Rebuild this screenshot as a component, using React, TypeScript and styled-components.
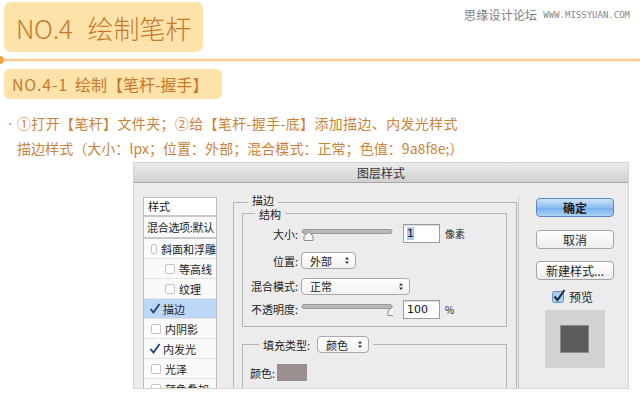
import styled, { createGlobalStyle } from 'styled-components'

const GlobalStyle = createGlobalStyle`
  html, body {
    margin: 0;
    padding: 0;
    background: #fff;
  }
  body {
    font-family: "Noto Sans CJK SC", "Noto Sans", sans-serif;
  }
`

const orange = '#c57a2c'
const peach = '#fde2a9'

const styleItems = [
  { label: '斜面和浮雕', indent: 0, checked: false },
  { label: '等高线', indent: 14, checked: false },
  { label: '纹理', indent: 14, checked: false },
  { label: '描边', indent: 0, checked: true, selected: true },
  { label: '内阴影', indent: 0, checked: false },
  { label: '内发光', indent: 0, checked: true },
  { label: '光泽', indent: 0, checked: false },
  { label: '颜色叠加', indent: 0, checked: false },
]

function App() {
  return (
    <Page>
      <GlobalStyle />
      <Header>
        <TitleBox>
          NO.4<TitleCn>绘制笔杆</TitleCn>
        </TitleBox>
        <Watermark>
          <MarkCn>思缘设计论坛</MarkCn>
          <MarkUrl>WWW.MISSYUAN.COM</MarkUrl>
        </Watermark>
      </Header>
      <Divider />
      <SubTitle>
        <SubNo>NO.4-1</SubNo>
        <SubCn>绘制</SubCn>【笔杆-握手】
      </SubTitle>
      <Para>
        <Line $spacing={0.35}>
          <Bullet>·</Bullet>①打开【笔杆】文件夹；②给【笔杆-握手-底】添加描边、内发光样式
        </Line>
        <Line $spacing={0.05}>描边样式（大小：lpx；位置：外部；混合模式：正常；色值：9a8f8e;）</Line>
      </Para>

      <Dialog>
        <TitleBar>图层样式</TitleBar>
        <Body>
          <StyleList>
            <ListHead>样式</ListHead>
            <ListBlend>混合选项:默认</ListBlend>
            {styleItems.map((it) => (
              <ListRow key={it.label} $indent={it.indent} $selected={!!it.selected}>
                {it.checked ? <Tick /> : <Box />}
                {it.label}
              </ListRow>
            ))}
          </StyleList>

          <Main>
            <Group $pad="10px 9px 0 8px" $tall>
              <Legend $top={-10}>描边</Legend>
              <Group $pad="6px 0 0 0" style={{ height: 114 }}>
                <Legend $left={12}>结构</Legend>
                <Row $h={27}>
                  <Label>大小:</Label>
                  <Slider pos={0} />
                  <Field $selected>1</Field>
                  <Unit>像素</Unit>
                </Row>
                <Row $h={27}>
                  <Label>位置:</Label>
                  <Select $w={55}>外部</Select>
                </Row>
                <Row $h={24}>
                  <Label>混合模式:</Label>
                  <Select $w={109}>正常</Select>
                </Row>
                <Row $h={22}>
                  <Label>不透明度:</Label>
                  <Slider pos={1} />
                  <Field>100</Field>
                  <Unit>%</Unit>
                </Row>
              </Group>
              <Group $pad="19px 0 0 7px" $gapTop={17} $tall>
                <Legend $left={16} $top={-9} $h={17}>
                  填充类型:<Select $w={52} style={{ marginLeft: 7 }}>颜色</Select>
                </Legend>
                <ColorRow>
                  颜色:<Swatch />
                </ColorRow>
              </Group>
            </Group>
          </Main>

          <Side>
            <Button $primary>确定</Button>
            <Button $gap={13}>取消</Button>
            <Button $gap={12}>新建样式...</Button>
            <PreviewCheck>
              <BlueCheck />
              预览
            </PreviewCheck>
            <Preview>
              <PreviewSquare />
            </Preview>
          </Side>
        </Body>
      </Dialog>
    </Page>
  )
}

export default App

function Box() {
  return <CheckBox />
}

function Tick() {
  return (
    <svg width="12" height="11" viewBox="0 0 12 11" style={{ marginRight: 2, marginLeft: -2 }}>
      <path d="M1.5 6 L4.5 9.5 L10.5 1" fill="none" stroke="#1d3f7a" strokeWidth="1.8" />
    </svg>
  )
}

function BlueCheck() {
  return (
    <svg width="14" height="14" viewBox="0 0 14 14" style={{ marginRight: 3 }}>
      <rect x="0.5" y="2.5" width="11" height="11" rx="2" fill="#a9cdf3" stroke="#6a8fbf" />
      <path d="M2.5 7.5 L5.5 11 L12.5 1" fill="none" stroke="#1a2a4a" strokeWidth="2" />
    </svg>
  )
}

function Slider({ pos }: { pos: number }) {
  const x = 3 + pos * 84
  return (
    <svg width="92" height="14" viewBox="0 0 92 14" style={{ marginTop: 2, flexShrink: 0 }}>
      <rect x="1" y="1.5" width="90" height="4" rx="2" fill="#b8b8b8" stroke="#8a8a8a" strokeWidth="0.8" />
      <path
        d={`M${x} 12.5 L${x} 8 L${x + 4.5} 4 L${x + 9} 8 L${x + 9} 12.5 Z`}
        fill="#f6f6f6"
        stroke="#8c8c8c"
        strokeWidth="1"
      />
    </svg>
  )
}

function SelectArrows() {
  return (
    <svg width="6" height="9" viewBox="0 0 6 9">
      <path d="M1 3.5 L3 1 L5 3.5 Z M1 5.5 L3 8 L5 5.5 Z" fill="#333" />
    </svg>
  )
}

function Select({ $w, children, style }: { $w: number; children: React.ReactNode; style?: React.CSSProperties }) {
  return (
    <SelectBox $w={$w} style={style}>
      <span>{children}</span>
      <SelectArrows />
    </SelectBox>
  )
}

const Page = styled.div`
  width: 640px;
  height: 393px;
  overflow: hidden;
`

const Header = styled.div`
  display: flex;
  align-items: flex-start;
  height: 52px;
  padding: 2px 10px 0 4px;
  box-sizing: border-box;
`

const TitleBox = styled.div`
  width: 199px;
  height: 50px;
  box-sizing: border-box;
  padding-left: 12px;
  display: flex;
  align-items: center;
  background: ${peach};
  border-radius: 7px;
  color: ${orange};
  font-size: 26px;
  font-weight: 300;
  letter-spacing: -0.3px;
`

const TitleCn = styled.span`
  margin-left: 15px;
  letter-spacing: 0;
`

const Watermark = styled.div`
  margin-left: auto;
  margin-top: 4px;
  display: flex;
  align-items: center;
  gap: 6px;
  color: #7d7d7d;
`

const MarkCn = styled.span`
  font-size: 12px;
  letter-spacing: 0.2px;
`

const MarkUrl = styled.span`
  font-family: "DejaVu Sans Mono", monospace;
  font-size: 9px;
  color: #888;
`

const Divider = styled.div`
  position: relative;
  margin-top: 7px;
  height: 2px;
  background: #f8c98c;
  box-shadow: 0 0 3px rgba(248, 201, 140, 0.6);

  &::before {
    content: '';
    position: absolute;
    left: -4px;
    top: -3px;
    width: 8px;
    height: 8px;
    border-radius: 50%;
    background: #f2a640;
  }
`

const SubTitle = styled.div`
  margin: 8px 0 0 4px;
  width: 218px;
  height: 30px;
  box-sizing: border-box;
  padding-left: 8px;
  background: ${peach};
  border-radius: 6px;
  color: ${orange};
  font-size: 16px;
  line-height: 30px;
  white-space: nowrap;
`

const SubNo = styled.span`
  letter-spacing: 0.8px;
`

const SubCn = styled.span`
  margin-left: 7px;
`

const Para = styled.div`
  margin-top: 12px;
  padding-left: 17px;
  color: #c9843a;
  font-size: 14px;
  line-height: 24px;
`

const Line = styled.div<{ $spacing: number }>`
  white-space: nowrap;
  letter-spacing: ${(p) => p.$spacing}px;
`

const Bullet = styled.span`
  display: inline-block;
  width: 9px;
  margin-left: -9px;
  font-family: "DejaVu Sans", sans-serif;
`

const Dialog = styled.div`
  margin: 3px 0 0 134px;
  width: 494px;
  height: 225px;
  display: flex;
  flex-direction: column;
  overflow: hidden;
  background: #ececec;
  box-shadow: 0 0 0 1px #d4d4d4;
`

const TitleBar = styled.div`
  height: 20px;
  flex-shrink: 0;
  box-sizing: border-box;
  border-bottom: 1px solid #a8a8a8;
  background: linear-gradient(#ececec, #d0d0d0);
  text-align: center;
  font-size: 12px;
  line-height: 20px;
  color: #333;
`

const Body = styled.div`
  flex: 1;
  display: flex;
  align-items: flex-start;
  padding: 14px 0 0 9px;
  font-size: 11px;
  color: #222;
`

const StyleList = styled.div`
  width: 74px;
  flex-shrink: 0;
  box-sizing: border-box;
  border: 1px solid #bcbcbc;
  background: #fafafa;
`

const ListHead = styled.div`
  height: 17px;
  line-height: 17px;
  padding-left: 4px;
  border-bottom: 2px solid #c9c9c9;
  background: #fff;
`

const ListBlend = styled.div`
  height: 20px;
  line-height: 20px;
  padding-left: 3px;
  border-bottom: 2px solid #c9c9c9;
  white-space: nowrap;
  letter-spacing: -0.3px;
`

const ListRow = styled.div<{ $indent: number; $selected: boolean }>`
  height: 20px;
  display: flex;
  align-items: center;
  box-sizing: border-box;
  padding-left: ${(p) => 7 + p.$indent}px;
  border-bottom: 1px solid #e4e4e4;
  background: ${(p) => (p.$selected ? '#bcd6f6' : '#fafafa')};
  white-space: nowrap;
`

const CheckBox = styled.span`
  width: 8px;
  height: 8px;
  margin-right: 4px;
  border: 1px solid #c4c4c4;
  border-radius: 2px;
  background: #fff;
`

const Main = styled.div`
  width: 284px;
  flex-shrink: 0;
  margin: 5px 0 0 16px;
`

const Group = styled.div<{ $pad: string; $tall?: boolean; $gapTop?: number }>`
  position: relative;
  box-sizing: border-box;
  margin-top: ${(p) => p.$gapTop || 0}px;
  padding: ${(p) => p.$pad};
  min-height: ${(p) => (p.$tall ? '200px' : '0')};
  border: 1px solid #b4b4b4;
`

const Legend = styled.div<{ $left?: number; $top?: number; $h?: number }>`
  position: absolute;
  top: ${(p) => p.$top ?? -7}px;
  left: ${(p) => p.$left ?? 14}px;
  height: ${(p) => p.$h ?? 13}px;
  display: flex;
  align-items: center;
  padding: 0 4px;
  background: #ececec;
  white-space: nowrap;
`

const Row = styled.div<{ $h: number }>`
  height: ${(p) => p.$h}px;
  display: flex;
  align-items: center;
`

const Label = styled.span`
  width: 55px;
  flex-shrink: 0;
  margin-right: 3px;
  text-align: right;
  white-space: nowrap;
`

const Field = styled.div<{ $selected?: boolean }>`
  width: 37px;
  height: 19px;
  margin-left: 10px;
  box-sizing: border-box;
  padding-left: 3px;
  border: 1px solid #9c9c9c;
  box-shadow: inset 0 1px 1px rgba(0, 0, 0, 0.15);
  background: #fff;
  font-family: "DejaVu Sans", sans-serif;
  font-size: 11px;
  line-height: 17px;
  color: #111;

  ${(p) =>
    p.$selected &&
    `
    &::first-letter {
      background: #a9cbf3;
    }
  `}
`

const Unit = styled.span`
  margin-left: 5px;
  font-size: 10px;
`

const SelectBox = styled.div<{ $w: number }>`
  width: ${(p) => p.$w}px;
  height: 17px;
  box-sizing: border-box;
  display: flex;
  align-items: center;
  justify-content: space-between;
  padding: 0 5px 0 8px;
  border: 1px solid #a9a9a9;
  border-radius: 4px;
  background: linear-gradient(#ffffff, #f1f1f1);
  font-size: 11px;
`

const ColorRow = styled.div`
  height: 17px;
  display: flex;
  align-items: center;
`

const Swatch = styled.span`
  width: 30px;
  height: 17px;
  margin-left: 2px;
  background: #9a8f8e;
`

const Side = styled.div`
  align-self: stretch;
  margin-left: 1px;
  padding: 1px 0 0 17px;
  border-left: 1px solid #c6c6c6;
`

const Button = styled.div<{ $primary?: boolean; $gap?: number }>`
  width: 78px;
  height: 19px;
  box-sizing: border-box;
  margin-top: ${(p) => p.$gap || 0}px;
  border: 1px solid ${(p) => (p.$primary ? '#5a86c2' : '#a3a3a3')};
  border-radius: 4px;
  background: ${(p) =>
    p.$primary
      ? 'linear-gradient(#cfe4fb, #8dbdf1 50%, #74aeee 51%, #acd2f8)'
      : 'linear-gradient(#ffffff, #ededed)'};
  text-align: center;
  font-size: 12px;
  line-height: 17px;
  font-weight: ${(p) => (p.$primary ? 700 : 400)};
  color: #1e1e1e;
`

const PreviewCheck = styled.div`
  height: 16px;
  margin-top: 8px;
  padding-left: 16px;
  display: flex;
  align-items: center;
  font-size: 12px;
`

const Preview = styled.div`
  width: 60px;
  height: 58px;
  margin: 6px 0 0 9px;
  box-sizing: border-box;
  padding: 15px 0 0 15px;
  background: #d3d3d3;
`

const PreviewSquare = styled.div`
  width: 29px;
  height: 28px;
  box-sizing: border-box;
  border: 1px solid #8c8c8c;
  background: #5c5c5c;
`
